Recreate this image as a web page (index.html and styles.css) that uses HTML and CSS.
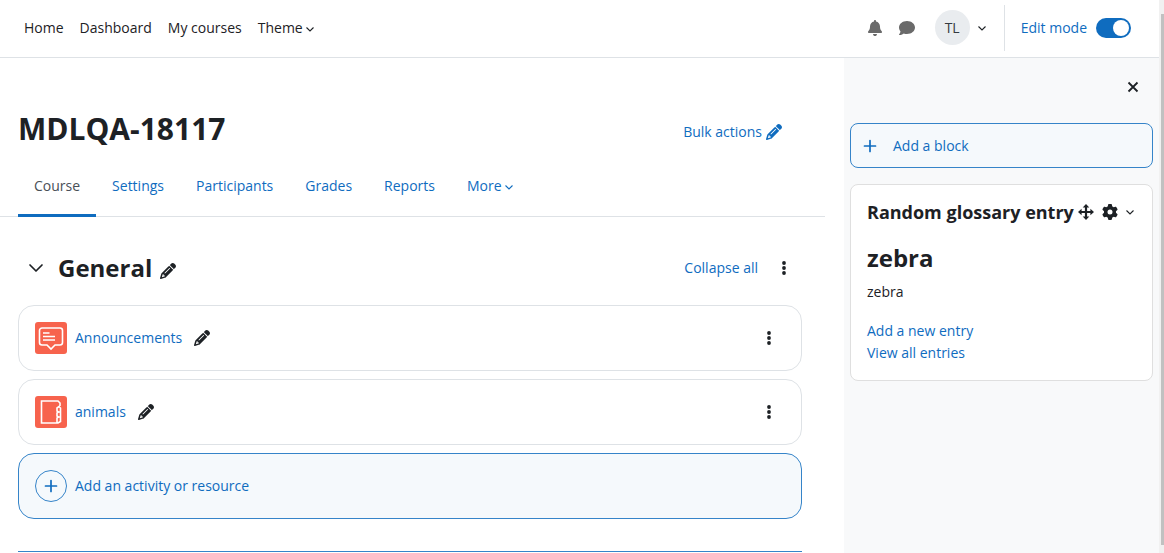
FILE: index.html
```html
<!DOCTYPE html>
<html lang="en">
<head>
  <meta charset="UTF-8">
  <meta name="viewport" content="width=device-width, initial-scale=1.0">
  <title>MDLQA-18117</title>
  <link rel="stylesheet" href="styles.css">
</head>
<body>
  <svg class="sprite" aria-hidden="true">
    <symbol id="pencil" viewBox="0 0 512 512"><path d="M410.3 231l11.3-11.3-33.9-33.9-62.1-62.1L291.7 89.8l-11.3 11.3-22.6 22.6L58.6 322.9c-10.4 10.4-18 23.3-22.2 37.4L1 480.7c-2.5 8.4-.2 17.5 6.1 23.7s15.3 8.5 23.7 6.1l120.3-35.4c14.1-4.2 27-11.8 37.4-22.2L387.7 253.7 410.3 231zM160 399.4l-9.1 22.7c-4 3.1-8.5 5.4-13.3 6.9L59.4 452l23-78.1c1.4-4.9 3.8-9.4 6.9-13.3l22.7-9.1v32c0 8.8 7.2 16 16 16h32zM362.7 18.7L348.3 33.2 325.7 55.8 314.3 67.1l33.9 33.9 62.1 62.1 33.9 33.9 11.3-11.3 22.6-22.6 14.5-14.5c25-25 25-65.5 0-90.5L453.3 18.7c-25-25-65.5-25-90.5 0zm-47.4 168l-144 144c-6.2 6.2-16.4 6.2-22.6 0s-6.2-16.4 0-22.6l144-144c6.2-6.2 16.4-6.2 22.6 0s6.2 16.4 0 22.6z"/></symbol>
    <symbol id="bell" viewBox="0 0 448 512"><path d="M224 0c-17.7 0-32 14.3-32 32V51.2C119 66 64 130.6 64 208v18.8c0 47-17.3 92.4-48.5 127.6l-7.4 8.3c-8.4 9.4-10.4 22.9-5.3 34.4S19.4 416 32 416H416c12.6 0 24-7.4 29.2-18.9s3.1-25-5.3-34.4l-7.4-8.3C401.3 319.2 384 273.9 384 226.8V208c0-77.4-55-142-128-156.8V32c0-17.7-14.3-32-32-32zm45.3 493.3c12-12 18.7-28.3 18.7-45.3H224 160c0 17 6.7 33.3 18.7 45.3s28.3 18.7 45.3 18.7s33.3-6.7 45.3-18.7z"/></symbol>
    <symbol id="comment" viewBox="0 0 512 512"><path d="M512 240c0 114.9-114.6 208-256 208c-37.1 0-72.3-6.4-104.1-17.9c-11.9 8.7-31.3 20.6-54.3 30.6C73.6 471.1 44.7 480 16 480c-6.5 0-12.3-3.9-14.8-9.9c-2.5-6-1.1-12.8 3.4-17.4c8-8 18-21 26-36C42.3 393.7 45 380 46 359C17 327 0 285 0 240C0 125.1 114.6 32 256 32s256 93.1 256 208z"/></symbol>
    <symbol id="gear" viewBox="0 0 512 512"><path d="M495.9 166.6c3.2 8.7 .5 18.4-6.4 24.6l-43.3 39.4c1.1 8.3 1.7 16.8 1.7 25.4s-.6 17.1-1.7 25.4l43.3 39.4c6.9 6.2 9.6 15.9 6.4 24.6c-4.4 11.9-9.7 23.3-15.8 34.3l-4.7 8.1c-6.6 11-14 21.4-22.1 31.2c-5.9 7.2-15.7 9.6-24.5 6.8l-55.7-17.7c-13.4 10.3-28.2 18.9-44 25.4l-12.5 57.1c-2 9.1-9 16.3-18.2 17.8c-13.8 2.3-28 3.5-42.5 3.5s-28.7-1.2-42.5-3.5c-9.2-1.5-16.2-8.7-18.2-17.8l-12.5-57.1c-15.8-6.5-30.6-15.1-44-25.4L83.1 425.9c-8.8 2.8-18.6 .3-24.5-6.8c-8.1-9.8-15.5-20.2-22.1-31.2l-4.7-8.1c-6.1-11-11.4-22.4-15.8-34.3c-3.2-8.7-.5-18.4 6.4-24.6l43.3-39.4C64.6 273.1 64 264.6 64 256s.6-17.1 1.7-25.4L22.4 191.2c-6.9-6.2-9.6-15.9-6.4-24.6c4.4-11.9 9.7-23.3 15.8-34.3l4.7-8.1c6.6-11 14-21.4 22.1-31.2c5.9-7.2 15.7-9.6 24.5-6.8l55.7 17.7c13.4-10.3 28.2-18.9 44-25.4l12.5-57.1c2-9.1 9-16.3 18.2-17.8C227.3 1.2 241.5 0 256 0s28.7 1.2 42.5 3.5c9.2 1.5 16.2 8.7 18.2 17.8l12.5 57.1c15.8 6.5 30.6 15.1 44 25.4l55.7-17.7c8.8-2.8 18.6-.3 24.5 6.8c8.1 9.8 15.5 20.2 22.1 31.2l4.7 8.1c6.1 11 11.4 22.4 15.8 34.3zM256 336a80 80 0 1 0 0-160 80 80 0 1 0 0 160z"/></symbol>
    <symbol id="move" viewBox="0 0 16 16"><path d="M8 0l3.3 3.6H9.1v3.3h3.3V4.7L16 8l-3.6 3.3V9.1H9.1v3.3h2.2L8 16l-3.3-3.6h2.2V9.1H3.6v2.2L0 8l3.6-3.3v2.2h3.3V3.6H4.7z"/></symbol>
    <symbol id="chevron" viewBox="0 0 8 8"><path d="M.5 2.5L4 6l3.5-3.5" fill="none" stroke="currentColor" stroke-width="1.1"/></symbol>
    <symbol id="fold" viewBox="0 0 16 16"><path d="M2 5l6 6 6-6" fill="none" stroke="currentColor" stroke-width="1.7" stroke-linecap="round" stroke-linejoin="round"/></symbol>
    <symbol id="dots" viewBox="0 0 4 14"><circle cx="2" cy="2" r="1.9"/><circle cx="2" cy="7" r="1.9"/><circle cx="2" cy="12" r="1.9"/></symbol>
    <symbol id="plus" viewBox="0 0 14 14"><path d="M7 1.5v11M1.500 7h11" fill="none" stroke="currentColor" stroke-width="1.7" stroke-linecap="round"/></symbol>
    <symbol id="close" viewBox="0 0 12 12"><path d="M1.500 1.500l9 9M10.500 1.500l-9 9" fill="none" stroke="currentColor" stroke-width="1.8"/></symbol>
  </svg>

  <div class="page">
    <header class="navbar">
      <nav class="primary-nav">
        <a href="#">Home</a>
        <a href="#">Dashboard</a>
        <a href="#">My courses</a>
        <a href="#">Theme <svg class="icon-chevron"><use href="#chevron"/></svg></a>
      </nav>
      <div class="user-tools">
        <button class="tool" aria-label="Notifications"><svg class="icon"><use href="#bell"/></svg></button>
        <button class="tool" aria-label="Messages"><svg class="icon"><use href="#comment"/></svg></button>
        <button class="user-menu" aria-label="User menu">
          <span class="avatar">TL</span>
          <svg class="icon-chevron"><use href="#chevron"/></svg>
        </button>
        <div class="edit-mode">
          <label for="edit-switch">Edit mode</label>
          <input type="checkbox" id="edit-switch" class="switch" checked>
        </div>
      </div>
    </header>

    <div class="columns">
      <main class="course">
        <div class="course-header">
          <h1>MDLQA-18117</h1>
          <button class="link-button">Bulk actions <svg class="icon"><use href="#pencil"/></svg></button>
        </div>
        <nav class="tabs">
          <a class="tab active" href="#">Course</a>
          <a class="tab" href="#">Settings</a>
          <a class="tab" href="#">Participants</a>
          <a class="tab" href="#">Grades</a>
          <a class="tab" href="#">Reports</a>
          <a class="tab" href="#">More <svg class="icon-chevron"><use href="#chevron"/></svg></a>
        </nav>

        <section class="section">
          <div class="section-header">
            <button class="fold" aria-label="Collapse"><svg class="icon"><use href="#fold"/></svg></button>
            <h2>General</h2>
            <button class="edit-title" aria-label="Edit section name"><svg class="icon"><use href="#pencil"/></svg></button>
            <a class="collapse-all" href="#">Collapse all</a>
            <button class="dots" aria-label="Section actions"><svg class="icon-dots"><use href="#dots"/></svg></button>
          </div>
          <ul class="activities">
            <li class="activity">
              <svg class="activity-icon" viewBox="0 0 32 32">
                <rect width="32" height="32" rx="3" fill="#f7634d"/>
                <path d="M7 6h18a2.500 2.500 0 0 1 2.500 2.500v12a2.500 2.500 0 0 1-2.500 2.500h-5l-4 4-4-4H7a2.500 2.500 0 0 1-2.500-2.500v-12A2.500 2.500 0 0 1 7 6z" fill="none" stroke="#fff" stroke-width="1.600"/>
                <path d="M8 11h6.500M8 14.500h12M8 18h12" stroke="#fff" stroke-width="1.500"/>
              </svg>
              <a href="#">Announcements</a>
              <button class="edit-title" aria-label="Edit title"><svg class="icon"><use href="#pencil"/></svg></button>
              <button class="dots" aria-label="Activity actions"><svg class="icon-dots"><use href="#dots"/></svg></button>
            </li>
            <li class="activity">
              <svg class="activity-icon" viewBox="0 0 32 32">
                <rect width="32" height="32" rx="3" fill="#f7634d"/>
                <path d="M25 10V7l-2-2H6.500v22H23l2.500-1.500V12L24 10.500l-2 1.500v3l1.500 1-1.500 1v3l1.500 1-1.500 1v4.500M23.500 16h2M23.500 21h2" fill="none" stroke="#fff" stroke-width="1.600"/>
              </svg>
              <a href="#">animals</a>
              <button class="edit-title" aria-label="Edit title"><svg class="icon"><use href="#pencil"/></svg></button>
              <button class="dots" aria-label="Activity actions"><svg class="icon-dots"><use href="#dots"/></svg></button>
            </li>
          </ul>
          <button class="add-activity">
            <span class="add-circle"><svg class="icon-plus"><use href="#plus"/></svg></span>
            Add an activity or resource
          </button>
        </section>
        <hr class="section-divider">
      </main>

      <aside class="drawer">
        <button class="close" aria-label="Close block drawer"><svg class="icon-close"><use href="#close"/></svg></button>
        <button class="add-block"><svg class="icon-plus"><use href="#plus"/></svg> Add a block</button>
        <section class="block">
          <div class="block-header">
            <h3>Random glossary entry</h3>
            <button aria-label="Move block"><svg class="icon"><use href="#move"/></svg></button>
            <button aria-label="Block actions" class="block-menu"><svg class="icon"><use href="#gear"/></svg><svg class="icon-chevron"><use href="#chevron"/></svg></button>
          </div>
          <h4>zebra</h4>
          <p>zebra</p>
          <ul class="block-links">
            <li><a href="#">Add a new entry</a></li>
            <li><a href="#">View all entries</a></li>
          </ul>
        </section>
      </aside>
    </div>
  </div>
  <div class="scrollbar"><div class="scroll-thumb"></div></div>
</body>
</html>
```

FILE: styles.css
```css
* {
  box-sizing: border-box;
}
body {
  margin: 0;
  display: flex;
  height: 100vh;
  overflow: hidden;
  background: #fff;
  color: #1d2125;
  font-family: 'Open Sans', 'Noto Sans', sans-serif;
  font-size: 14px;
  line-height: 22px;
}
a {
  color: #0f6cbf;
  text-decoration: none;
}
button {
  display: flex;
  align-items: center;
  padding: 0;
  border: 0;
  background: none;
  color: inherit;
  font: inherit;
  cursor: pointer;
}
h1, h2, h3, h4, p, ul {
  margin: 0;
  padding: 0;
}
ul {
  list-style: none;
}
svg {
  fill: currentColor;
  flex: none;
}
.sprite {
  display: none;
}
.icon {
  width: 16px;
  height: 16px;
}
.icon-chevron {
  width: 8px;
  height: 8px;
}
.icon-dots {
  width: 4px;
  height: 14px;
}
.icon-plus {
  width: 14px;
  height: 14px;
}
.icon-close {
  width: 12px;
  height: 12px;
}
.page {
  flex: 1;
  display: flex;
  flex-direction: column;
}

/* top bar */
.navbar {
  display: flex;
  justify-content: space-between;
  height: 58px;
  padding: 0 28px 2px 24px;
  border-bottom: 1px solid #dee2e6;
}
.primary-nav {
  display: flex;
  align-items: center;
  gap: 16px;
}
.primary-nav a {
  color: #1d2125;
}
.user-tools {
  display: flex;
  align-items: center;
}
.tool {
  margin-right: 16px;
  color: #6a6a6a;
}
.user-menu {
  gap: 8px;
  margin: 0 18px 0 4px;
}
.avatar {
  width: 35px;
  height: 35px;
  border-radius: 50%;
  background: #e9ecef;
  color: #343a40;
  line-height: 35px;
}
.edit-mode {
  display: flex;
  align-items: center;
  gap: 9px;
  height: 46px;
  padding-left: 16px;
  border-left: 1px solid #dee2e6;
  color: #0f6cbf;
}
.switch {
  appearance: none;
  display: flex;
  justify-content: flex-end;
  width: 35px;
  height: 20px;
  margin: 0;
  padding: 2px;
  border-radius: 10px;
  background: #0f6cbf;
}
.switch::before {
  content: "";
  width: 16px;
  height: 16px;
  border-radius: 50%;
  background: #fff;
}

.columns {
  flex: 1;
  display: flex;
}

/* course content */
.course {
  flex: 1;
  padding: 54px 42px 0 18px;
}
.course-header {
  display: flex;
  align-items: center;
  justify-content: space-between;
  padding-right: 20px;
}
h1 {
  font-size: 30px;
  line-height: 34px;
}
.link-button {
  gap: 4px;
  margin-top: 5px;
  color: #0f6cbf;
}
.tabs {
  display: flex;
  margin: 9px -23px 0 -18px;
  padding-left: 18px;
  border-bottom: 1px solid #dee2e6;
}
.tab {
  margin-bottom: -1px;
  padding: 17px 16px;
  border: solid transparent;
  border-width: 3px 0;
}
.tab.active {
  border-bottom-color: #0f6cbf;
  color: #495057;
}
.section {
  padding-top: 34px;
}
.section-header {
  display: flex;
  align-items: center;
  margin-bottom: 20px;
  padding-right: 16px;
}
.fold {
  margin: 0 14px 0 10px;
}
h2, h4 {
  font-size: 24px;
  line-height: 34px;
}
.section-header .edit-title {
  margin: 5px 0 0 8px;
}
.collapse-all {
  margin: 0 24px 0 auto;
}
.activities {
  display: grid;
  gap: 8px;
  margin-bottom: 8px;
}
.activity, .add-activity {
  display: flex;
  align-items: center;
  gap: 8px;
  width: 100%;
  padding: 16px;
  border: 1px solid #dee2e6;
  border-radius: 16px;
}
.activity-icon {
  width: 32px;
  height: 32px;
}
.activity .edit-title {
  margin-left: 4px;
}
.activity .dots {
  margin: 0 14px 0 auto;
}
.add-activity, .add-block {
  border: 1px solid #3584c9;
  background: #f5f9fc;
  color: #0f6cbf;
}
.add-circle {
  display: flex;
  align-items: center;
  justify-content: center;
  width: 32px;
  height: 32px;
  border: 1px solid #3584c9;
  border-radius: 50%;
}
.section-divider {
  margin: 32px 0 0;
  border: 0;
  border-top: 1px solid #3584c9;
}

/* block drawer */
.drawer {
  width: 315px;
  padding: 22px 6px 0;
  background: #f8f9fa;
}
.close {
  margin: 0 14px 28px auto;
  padding: 1px 0 2px;
}
.add-block {
  gap: 16px;
  width: 100%;
  margin-bottom: 16px;
  padding: 11px 12px 10px;
  border-radius: 8px;
}
.block {
  padding: 16px;
  border: 1px solid #dfdfdf;
  border-radius: 8px;
  background: #fff;
}
.block-header {
  display: flex;
  align-items: center;
  gap: 8px;
  margin-bottom: 18px;
}
h3 {
  margin-right: -4px;
  font-size: 18px;
  line-height: 22px;
}
.block-menu {
  gap: 8px;
}
.block p {
  margin: 6px 0 17px;
}

.scrollbar {
  width: 5px;
  padding: 14px 0 8px 2px;
  background: #f1f1f1;
}
.scroll-thumb {
  height: 100%;
  background: #c1c1c1;
}
```
